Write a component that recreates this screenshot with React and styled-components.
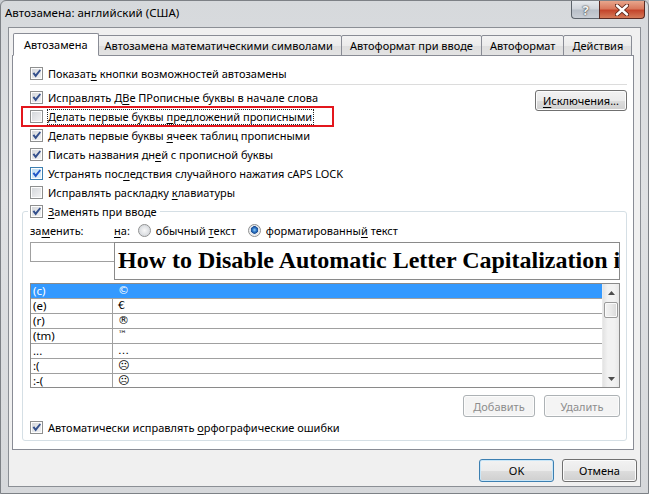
import React from 'react'
import styled, { createGlobalStyle } from 'styled-components'

const GlobalStyle = createGlobalStyle`
    html, body {
        margin: 0;
        padding: 0;
    }
    body {
        font-family: "Noto Sans", "DejaVu Sans", sans-serif;
        font-size: 11px;
        color: #000;
        background: #c9cdd2;
    }
    * {
        box-sizing: border-box;
    }
`;

const rows = [
    { label: '(c)', value: '©', selected: true },
    { label: '(e)', value: '€' },
    { label: '(r)', value: '®' },
    { label: '(tm)', value: '™', small: true },
    { label: '...', value: '…' },
    { label: ':(', value: '☹' },
    { label: ':-(', value: '☹' },
];

const tabs = [
    'Автозамена',
    'Автозамена математическими символами',
    'Автоформат при вводе',
    'Автоформат',
    'Действия',
];

function CheckMark() {
    return (
        <svg width="11" height="11" viewBox="0 0 11 11">
            <path d="M1.6 5.6 L3.2 4.2 L4.6 6.2 L8.6 1.4 L10 2.6 L4.7 9.4 Z" fill="currentColor"/>
        </svg>
    )
}

function CheckBox({ checked, hot }) {
    return (
        <Box $hot={hot}>
            {checked && <CheckMark/>}
        </Box>
    )
}

function Arrow({ down }) {
    return (
        <svg width="7" height="4" viewBox="0 0 7 4">
            <path d={down ? 'M0 0 L7 0 L3.5 4 Z' : 'M0 4 L7 4 L3.5 0 Z'} fill="#4d4d4d"/>
        </svg>
    )
}

function App() {
    return (
        <>
            <GlobalStyle/>
            <Window>
                <TitleBar>
                    <Title>Автозамена: английский (США)</Title>
                    <Controls>
                        <HelpButton>?</HelpButton>
                        <CloseButton>
                            <svg width="14" height="12" viewBox="0 0 14 12">
                                <path d="M2 1.5 L12 10.5 M12 1.5 L2 10.5" stroke="#5a2418" strokeWidth="4.2" strokeLinecap="round"/>
                                <path d="M2 1.5 L12 10.5 M12 1.5 L2 10.5" stroke="#fff" strokeWidth="2.4" strokeLinecap="round"/>
                            </svg>
                        </CloseButton>
                    </Controls>
                </TitleBar>

                <Client>
                    <TabStrip>
                        {tabs.map((t, i) => (
                            <Tab key={t} $active={i === 0}>{t}</Tab>
                        ))}
                    </TabStrip>

                    <Panel>
                        <Row>
                            <CheckBox checked/>
                            <span>Показат<U>ь</U> кнопки возможностей автозамены</span>
                        </Row>
                        <Separator/>

                        <OptionsGrid>
                            <Options>
                                <Row>
                                    <CheckBox checked/>
                                    <span>Исправлять Д<U>В</U>е ПРописные буквы в начале слова</span>
                                </Row>
                                <Row $highlight>
                                    <CheckBox/>
                                    <Focused>Делать первые буквы <U>п</U>редложений прописными</Focused>
                                </Row>
                                <Row>
                                    <CheckBox checked/>
                                    <span>Делать первые буквы <U>я</U>чеек таблиц прописными</span>
                                </Row>
                                <Row>
                                    <CheckBox checked/>
                                    <span>Писать названия дн<U>е</U>й с прописной буквы</span>
                                </Row>
                                <Row>
                                    <CheckBox checked hot/>
                                    <span>Устранять пос<U>л</U>едствия случайного нажатия cAPS LOCK</span>
                                </Row>
                                <Row>
                                    <CheckBox/>
                                    <span>Исправлять раскладку <U>к</U>лавиатуры</span>
                                </Row>
                            </Options>
                            <Button $width={92} $height={21}><U>И</U>сключения...</Button>
                        </OptionsGrid>

                        <Group>
                            <Legend>
                                <CheckBox checked/>
                                <span><U>З</U>аменять при вводе</span>
                            </Legend>

                            <LabelRow>
                                <LabelCell>за<U>м</U>енить:</LabelCell>
                                <span><U>н</U>а:</span>
                                <RadioOption $gap={8}>
                                    <Radio/>
                                    <span>обычный <U>т</U>екст</span>
                                </RadioOption>
                                <RadioOption $gap={12}>
                                    <Radio $checked/>
                                    <span>форматированны<U>й</U> текст</span>
                                </RadioOption>
                            </LabelRow>

                            <InputRow>
                                <ReplaceInput/>
                                <WithBox>How to Disable Automatic Letter Capitalization i</WithBox>
                            </InputRow>

                            <List>
                                <ListRows>
                                    {rows.map((r) => (
                                        <ListRow key={r.label + r.value} $selected={r.selected}>
                                            <KeyCell $selected={r.selected}>{r.label}</KeyCell>
                                            <ValueCell $small={r.small}>{r.value}</ValueCell>
                                        </ListRow>
                                    ))}
                                </ListRows>
                                <ScrollBar>
                                    <ScrollArrow><Arrow/></ScrollArrow>
                                    <Thumb/>
                                    <ScrollTrack/>
                                    <ScrollArrow><Arrow down/></ScrollArrow>
                                </ScrollBar>
                            </List>

                            <ButtonRow>
                                <Button $width={72} $height={22} disabled>Добавить</Button>
                                <Button $width={76} $height={22} disabled>Удалить</Button>
                            </ButtonRow>

                            <Row $flush>
                                <CheckBox checked/>
                                <span>Автоматически исправлять <U>о</U>рфографические ошибки</span>
                            </Row>
                        </Group>
                    </Panel>

                    <Footer>
                        <Button $width={75} $height={23} $default>OK</Button>
                        <Button $width={75} $height={23}>Отмена</Button>
                    </Footer>
                </Client>
            </Window>
        </>
    )
}

export default App


const Window = styled.div`
    width: 649px;
    height: 494px;
    display: flex;
    flex-direction: column;
    background: linear-gradient(to bottom, #d6d9dc 0%, #dfe1e3 40%, #d6d8db 100%);
    border: 1px solid #7d8186;
    border-radius: 6px 6px 0 0;
`;

const TitleBar = styled.div`
    height: 26px;
    display: flex;
    justify-content: space-between;
    align-items: flex-start;
    padding: 0 3px 0 4px;
`;

const Title = styled.div`
    line-height: 24px;
    font-size: 11.5px;
    color: #000;
`;

const Controls = styled.div`
    display: flex;
`;

const HelpButton = styled.div`
    width: 28px;
    height: 18px;
    display: flex;
    align-items: center;
    justify-content: center;
    border: 1px solid #5c636b;
    border-top: none;
    border-right: none;
    border-radius: 0 0 0 4px;
    background: linear-gradient(to bottom, #e6e9ed 0%, #cfd4da 48%, #b7bec7 52%, #c9ced5 100%);
    color: #f4f4f4;
    font-weight: bold;
    font-size: 13px;
    text-shadow: 0 0 1px #333, 0 0 2px #444;
`;

const CloseButton = styled.div`
    width: 46px;
    height: 18px;
    display: flex;
    align-items: center;
    justify-content: center;
    border: 1px solid #5b2a22;
    border-top: none;
    border-radius: 0 0 4px 0;
    background: linear-gradient(to bottom, #e8a68c 0%, #d9795d 45%, #c4452b 55%, #d57a58 100%);
`;

const Client = styled.div`
    flex: 1;
    margin: 0 7px 6px 7px;
    border: 1px solid #8b8f95;
    background: #f0f0f0;
    display: flex;
    flex-direction: column;
    padding: 5px 3px 4px 3px;
`;

const TabStrip = styled.div`
    height: 23px;
    display: flex;
    align-items: flex-end;
    padding-left: 3px;
    margin-bottom: -1px;
    position: relative;
    z-index: 1;
`;

const Tab = styled.div`
    position: relative;
    height: ${p => p.$active ? '23px' : '21px'};
    padding: ${p => p.$active ? '3px 10px 0' : '2px 8px 0'};
    margin: ${p => p.$active ? '0 -2px' : '0 0 0 -1px'};
    z-index: ${p => p.$active ? 2 : 1};
    border: 1px solid #898c95;
    border-bottom: ${p => p.$active ? '1px solid #fff' : '1px solid #898c95'};
    border-radius: 2px 2px 0 0;
    background: ${p => p.$active ? '#fff' : 'linear-gradient(to bottom, #f3f3f3 0%, #ebebeb 50%, #dedede 51%, #e3e3e3 100%)'};
    white-space: nowrap;
    line-height: 15px;

    &:first-child {
        margin-left: ${p => p.$active ? '-2px' : '0'};
    }
`;

const Panel = styled.div`
    height: 395px;
    margin-right: 3px;
    background: #fff;
    border: 1px solid #898c95;
    padding: 8px 6px 0 9px;
    display: flex;
    flex-direction: column;
`;

const Row = styled.label`
    height: 19px;
    display: flex;
    align-items: center;
    gap: 5px;
    white-space: nowrap;
    margin-left: ${p => p.$flush ? '0' : p.$highlight ? '0' : '8px'};
    padding-left: ${p => p.$highlight ? '8px' : '0'};
    width: ${p => p.$highlight ? '311px' : 'auto'};
    outline: ${p => p.$highlight ? '2px solid #e3161c' : 'none'};
    outline-offset: -1px;
`;

const Focused = styled.span`
    outline: 1px dotted #222;
    outline-offset: 0;
    padding-right: 1px;
    line-height: 14px;
`;

const U = styled.span`
    text-decoration: underline;
    text-underline-offset: 2px;
`;

const Box = styled.span`
    flex: none;
    width: 13px;
    height: 13px;
    display: flex;
    align-items: center;
    justify-content: center;
    border: 1px solid ${p => p.$hot ? '#3c7fb1' : '#8e8f8f'};
    background: ${p => p.$hot
        ? 'linear-gradient(135deg, #b9dcf3 0%, #e6f3fb 100%)'
        : 'linear-gradient(135deg, #d2d5d9 0%, #f4f4f5 100%)'};
    box-shadow: inset 0 0 0 1px #fdfdfd;
    color: ${p => p.$hot ? '#1f56c7' : '#334f8c'};
`;

const Separator = styled.div`
    height: 1px;
    background: #dcdcdc;
    margin: 1px 0 3px 8px;
`;

const OptionsGrid = styled.div`
    display: grid;
    grid-template-columns: 1fr auto;
    align-items: start;
`;

const Options = styled.div`
    display: flex;
    flex-direction: column;
`;

const Button = styled.button`
    width: ${p => p.$width}px;
    height: ${p => p.$height}px;
    margin-top: ${p => p.$height === 21 ? '2px' : '0'};
    font-family: inherit;
    font-size: 11px;
    color: #000;
    padding: 0;
    border: 1px solid ${p => p.$default ? '#3c7fb1' : '#707070'};
    border-radius: 3px;
    background: linear-gradient(to bottom, #f2f2f2 0%, #ebebeb 50%, #dddddd 51%, #cfcfcf 100%);
    box-shadow: inset 0 0 0 1px ${p => p.$default ? '#c8e6f8' : '#fbfbfb'};

    &:disabled {
        color: #8d8d8d;
        border-color: #adb2b5;
        background: #f4f4f4;
        box-shadow: inset 0 0 0 1px #fcfcfc;
    }
`;

const Group = styled.fieldset`
    margin: 0;
    padding: 1px 6px 3px 7px;
    border: 1px solid #d5dfe5;
    border-radius: 3px;
    min-inline-size: 0;
`;

const Legend = styled.legend`
    height: 19px;
    display: flex;
    align-items: center;
    gap: 5px;
    padding: 0 3px 0 2px;
    margin-left: -2px;
    white-space: nowrap;
`;

const LabelRow = styled.div`
    height: 16px;
    display: flex;
    align-items: center;
    white-space: nowrap;
`;

const LabelCell = styled.span`
    width: 84px;
`;

const RadioOption = styled.span`
    display: flex;
    align-items: center;
    gap: 5px;
    margin-left: ${p => p.$gap}px;
`;

const Radio = styled.span`
    width: 13px;
    height: 13px;
    border-radius: 50%;
    border: 1px solid #8e8f8f;
    background: ${p => p.$checked
        ? 'radial-gradient(circle at 50% 45%, #8fd0f7 0px, #2f77c6 2px, #1a4c93 3.5px, #dfe3e8 4px, #f6f6f6 6px)'
        : 'radial-gradient(circle at 50% 50%, #f8f8f8 0px, #dadde1 5px, #f4f4f4 6px)'};
`;

const InputRow = styled.div`
    display: flex;
    align-items: flex-start;
    margin-top: 4px;
`;

const ReplaceInput = styled.div`
    width: 84px;
    height: 20px;
    background: #fff;
    border: 1px solid #a0a0a0;
    border-right: none;
`;

const WithBox = styled.div`
    flex: 1;
    height: 38px;
    border: 1px solid #8a8a8a;
    background: #fff;
    overflow: hidden;
    white-space: nowrap;
    padding-left: 3px;
    font-family: "Liberation Serif", "Times New Roman", serif;
    font-weight: bold;
    font-size: 24px;
    line-height: 35px;
`;

const List = styled.div`
    height: 105px;
    margin-top: 3px;
    border: 1px solid #8a8a8a;
    display: flex;
    overflow: hidden;
`;

const ListRows = styled.div`
    flex: 1;
    display: flex;
    flex-direction: column;
`;

const ListRow = styled.div`
    flex: none;
    height: 15px;
    display: grid;
    grid-template-columns: 82px 1fr;
    border-bottom: 1px solid #a0a0a0;
    background: ${p => p.$selected ? '#3399ff' : '#fff'};
    color: ${p => p.$selected ? '#fff' : '#000'};
    font-size: 11.5px;
    line-height: 14px;
`;

const KeyCell = styled.div`
    padding-left: 2px;
    border-right: 1px solid ${p => p.$selected ? '#3399ff' : '#a0a0a0'};
`;

const ValueCell = styled.div`
    padding-left: 5px;
    font-family: "DejaVu Sans", sans-serif;
    font-size: ${p => p.$small ? '9px' : '11px'};
    line-height: ${p => p.$small ? '10px' : '14px'};
`;

const ScrollBar = styled.div`
    width: 17px;
    flex: none;
    display: flex;
    flex-direction: column;
    background: linear-gradient(to right, #e3e3e3 0%, #f2f2f2 30%, #f2f2f2 70%, #e8e8e8 100%);
    border-left: 1px solid #eaeaea;
`;

const ScrollArrow = styled.div`
    height: 17px;
    display: flex;
    align-items: center;
    justify-content: center;
`;

const Thumb = styled.div`
    height: 16px;
    margin: 1px 1px 0;
    border: 1px solid #9a9a9a;
    border-radius: 2px;
    background: linear-gradient(to right, #f3f3f3 0%, #e9e9e9 50%, #d9d9d9 100%);
    box-shadow: inset 0 0 0 1px #fafafa;
`;

const ScrollTrack = styled.div`
    flex: 1;
`;

const ButtonRow = styled.div`
    display: flex;
    justify-content: flex-end;
    gap: 9px;
    margin-top: 7px;
    margin-bottom: 1px;
`;

const Footer = styled.div`
    display: flex;
    justify-content: flex-end;
    gap: 8px;
    margin-top: 9px;
`;
